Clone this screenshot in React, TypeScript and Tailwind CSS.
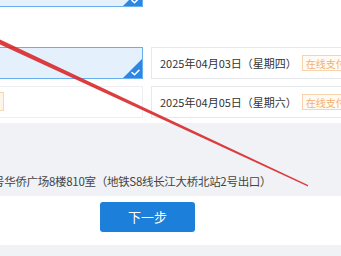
import React from "react";

const FONT = "font-['Noto_Sans_CJK_SC','Noto_Sans',sans-serif]";

function CheckCorner() {
  return (
    <svg className="absolute bottom-0 right-0 h-[19px] w-[19px]" viewBox="0 0 19 19">
      <polygon points="19,0 19,19 0,19" fill="#2d87e2" />
      <path d="M9 13.5l2.5 2.3 4.5-4.6" fill="none" stroke="#fff" strokeWidth={1.5} strokeLinecap="round" strokeLinejoin="round" />
    </svg>
  );
}

function PayBadge() {
  return (
    <span className="flex h-[16px] shrink-0 items-center whitespace-nowrap border border-[#f8d3ab] bg-[#fffaf2] px-[3px] text-[10px] text-[#f2b06e]">
      在线支付费用
    </span>
  );
}

function DateRow({ date, selected, offset }: { date: string; selected?: boolean; offset?: boolean }) {
  return (
    <div className="flex h-[32px] gap-[8px]">
      <div
        className={`relative ml-[-17px] w-[160px] shrink-0 border ${
          selected ? "border-[#68aff0] bg-[#e4f1fd]" : "border-[#eceef1] bg-white"
        }`}
      >
        {selected && <CheckCorner />}
        {offset && (
          <span className="absolute left-[6px] top-[5px] h-[19px] w-[14px] border border-[#f1d9b0] bg-[#fdf6e8]" />
        )}
      </div>
      <div className="flex w-[230px] shrink-0 items-center gap-[5px] border border-[#e6e8ec] bg-white pl-[8px]">
        <span className="whitespace-nowrap text-[11px] text-[#333]">{date}</span>
        <PayBadge />
      </div>
    </div>
  );
}

export default function App() {
  return (
    <div className={`relative h-[256px] w-[341px] overflow-hidden bg-white ${FONT}`}>
      <div className="flex flex-col">
        <div className="flex h-[123px] flex-col">
          <div className="ml-[-17px] mt-[-26px] h-[33px] w-[160px] shrink-0">
            <div className="relative h-full border border-[#68aff0] bg-[#e4f1fd]">
              <CheckCorner />
            </div>
          </div>
          <div className="mt-[40px] flex flex-col gap-[7px]">
            <DateRow date="2025年04月03日（星期四）" selected />
            <DateRow date="2025年04月05日（星期六）" offset />
          </div>
        </div>
        <div className="flex h-[73px] items-end bg-[#f0f2f6] pb-[6px]">
          <p className="ml-[-7px] whitespace-nowrap text-[11.5px] tracking-[-0.3px] text-[#444]">
            号华侨广场8楼810室（地铁S8线长江大桥北站2号出口）
          </p>
        </div>
        <div className="flex h-[49px] items-start bg-white pl-[100px] pt-[6px]">
          <button
            type="button"
            className="flex h-[30px] w-[95px] items-center justify-center rounded-[3px] bg-[#1c7fd9] text-[13px] text-white"
          >
            下一步
          </button>
        </div>
        <div className="h-[11px] bg-[#f0f2f6]" />
      </div>
      <svg className="pointer-events-none absolute left-0 top-0 h-[256px] w-[341px]" viewBox="0 0 341 256">
        <polygon points="0,39.5 0,44.5 308,186.5 308,185" fill="#d8282a" opacity={0.9} />
      </svg>
    </div>
  );
}
